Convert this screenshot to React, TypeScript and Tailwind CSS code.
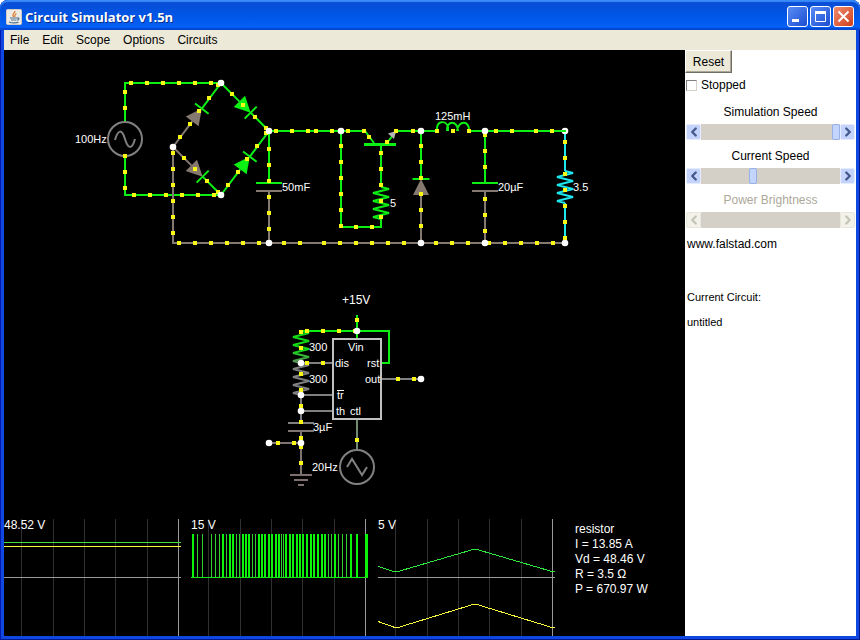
import { useState } from "react";
import { ChevronLeft, ChevronRight } from "lucide-react";

const GREEN = "#0cf014";
const GROUND = "#85786f";
const GRAY = "#808080";
const CYAN = "#1ce6ee";

const menus = ["File", "Edit", "Scope", "Options", "Circuits"];

const readout = ["resistor", "I = 13.85 A", "Vd = 48.46 V", "R = 3.5 Ω", "P = 670.97 W"];

interface Wire {
  d: string;
  color: string;
}

const wires: Wire[] = [
  // rectifier source loop
  { d: "M125 122V83H221", color: GREEN },
  { d: "M125 156V195H221", color: GREEN },
  { d: "M173 147V243H565", color: GROUND },
  // filter capacitor
  { d: "M269 131V183M256 183H282", color: GREEN },
  { d: "M269 191V243M256 191H282", color: GROUND },
  // pass transistor and its base resistor
  { d: "M269 131H365L374 143M387 143L396 131H437", color: GREEN },
  { d: "M341 131V227H381V219M381 145V187", color: GREEN },
  { d: "M469 131H565", color: GREEN },
  // output capacitor
  { d: "M485 131V183M472 183H498", color: GREEN },
  { d: "M485 191V243M472 191H498", color: GROUND },
  { d: "M565 131V171M565 203V243", color: CYAN },
  // timer
  { d: "M357 315V339M301 331H389V363H382", color: GREEN },
  { d: "M301 363H333M301 395H333M301 411H333M382 379H421", color: GRAY },
  { d: "M301 395V423M288 423H314", color: GRAY },
  { d: "M301 431V475M288 431H314M269 443H301", color: "#7f7470" },
  { d: "M290 475H312M294 480H308M298 485H304", color: "#7f7070" },
  { d: "M357 419V450", color: "#6f8a6f" },
];

// x, y, dx, dy, count
const currentDots: number[][] = [
  [131, 83, 16, 0, 6],
  [125, 92, 0, 16, 2],
  [125, 156, 0, 16, 3],
  [134, 195, 16, 0, 6],
  [180, 137, 9.5, -13, 5],
  [232, 94, 11.3, 11.3, 4],
  [184, 158, 11.3, 11.3, 4],
  [228, 185, 9.5, -13, 5],
  [173, 153, 0, 16, 6],
  [179, 243, 16, 0, 6],
  [284, 243, 16, 0, 2],
  [324, 243, 16, 0, 6],
  [436, 243, 16, 0, 3],
  [489, 243, 16, 0, 5],
  [269, 149, 0, 16, 3],
  [269, 197, 0, 16, 3],
  [276, 131, 16, 0, 3],
  [316, 131, 16, 0, 4],
  [341, 146, 0, 16, 6],
  [356, 227, 16, 0, 2],
  [381, 153, 0, 16, 5],
  [369, 137, 0, 0, 1],
  [387, 142, 9, -11, 2],
  [413, 131, 0, 0, 1],
  [421, 146, 0, 16, 6],
  [437, 131, 16, 0, 3],
  [496, 131, 16, 0, 2],
  [536, 131, 16, 0, 2],
  [485, 135, 0, 16, 3],
  [485, 199, 0, 16, 3],
  [565, 142, 0, 16, 7],
  [301, 332, 0, 16, 2],
  [307, 331, 16, 0, 4],
  [357, 320, 0, 0, 1],
  [307, 363, 16, 0, 2],
  [301, 374, 0, 16, 5],
  [301, 447, 0, 16, 2],
  [278, 443, 16, 0, 2],
  [398, 379, 16, 0, 2],
  [357, 440, 0, 0, 1],
];

const nodes: number[][] = [
  [221, 83], [173, 147], [221, 195], [269, 131], [269, 243], [341, 131],
  [421, 131], [421, 243], [485, 131], [485, 243], [565, 131], [565, 243],
  [357, 331], [301, 363], [301, 395], [301, 411], [301, 443], [269, 443], [421, 379],
];

const labels: [number, number, string][] = [
  [75, 143, "100Hz"],
  [282, 191, "50mF"],
  [390, 207, "5"],
  [435, 120, "125mH"],
  [498, 191, "20µF"],
  [573, 191, "3.5"],
  [309, 351, "300"],
  [309, 383, "300"],
  [348, 351, "Vin"],
  [335, 367, "dis"],
  [367, 367, "rst"],
  [365, 383, "out"],
  [337, 399, "tr"],
  [336, 415, "th"],
  [350, 415, "ctl"],
  [313, 431, "3µF"],
  [312, 471, "20Hz"],
];

function Diode({ x1, y1, x2, y2, from, to }: { x1: number; y1: number; x2: number; y2: number; from: string; to: string }) {
  const length = Math.hypot(x2 - x1, y2 - y1);
  const angle = (Math.atan2(y2 - y1, x2 - x1) * 180) / Math.PI;
  const mid = length / 2;

  return (
    <g transform={`translate(${x1} ${y1}) rotate(${angle})`} strokeWidth="2">
      <path d={`M0 0H${mid - 8}`} stroke={from} />
      <path d={`M${mid + 8} 0H${length}M${mid + 8} -8.5V8.5`} stroke={to} />
      <path d={`M${mid - 8} -8L${mid + 8} 0L${mid - 8} 8Z`} fill={from} stroke="none" />
    </g>
  );
}

function Resistor({ x, y, color }: { x: number; y: number; color: string }) {
  const points = [`${x},${y}`];
  for (let i = 0; i < 4; i++) {
    const top = y + i * 8;
    points.push(`${x + 8},${top + 2}`, `${x - 8},${top + 6}`);
  }
  points.push(`${x},${y + 32}`);
  return <polyline points={points.join(" ")} fill="none" stroke={color} strokeWidth="2" />;
}

function Circuit() {
  return (
    <svg
      viewBox="4 50 681 468"
      preserveAspectRatio="xMinYMin meet"
      className="h-[468px] w-full shrink-0 font-['Liberation_Sans',Arial,sans-serif]"
      role="img"
      aria-label="Circuit"
    >
      <defs>
        <linearGradient id="drop" gradientUnits="userSpaceOnUse" x1="0" y1="331" x2="0" y2="363">
          <stop offset="0.6" stopColor="#13dc17" />
          <stop offset="1" stopColor="#5f8c60" />
        </linearGradient>
      </defs>

      {wires.map((w) => (
        <path key={w.d} d={w.d} fill="none" stroke={w.color} strokeWidth="2" />
      ))}

      <Diode x1={173} y1={147} x2={221} y2={83} from={GROUND} to={GREEN} />
      <Diode x1={221} y1={83} x2={269} y2={131} from={GREEN} to={GREEN} />
      <Diode x1={173} y1={147} x2={221} y2={195} from={GROUND} to={GREEN} />
      <Diode x1={221} y1={195} x2={269} y2={131} from={GREEN} to={GREEN} />
      <Diode x1={421} y1={243} x2={421} y2={131} from={GROUND} to={GREEN} />

      <Resistor x={381} y={187} color={GREEN} />
      <Resistor x={565} y={171} color={CYAN} />
      <Resistor x={301} y={331} color="url(#drop)" />
      <Resistor x={301} y={363} color={GRAY} />

      {/* Transistor */}
      <path d="M364 144.500H396" stroke={GREEN} strokeWidth="3" />
      <path d="M396 131L394 139L388 133.500Z" fill="#b4b4b4" />

      {/* Inductor */}
      <path
        d="M437 131C436 120 446 120 448 127L448 131M447 131C446 120 458 120 458 131M457 131C458 120 470 120 469 131"
        fill="none"
        stroke={GREEN}
        strokeWidth="2"
      />

      {/* Voltage sources */}
      <g fill="none" stroke={GRAY} strokeWidth="2">
        <circle cx="125" cy="139" r="17" />
        <path d="M115 140C118 129 122 129 125 139S132 150 135 139" />
        <circle cx="357" cy="467" r="17" />
        <path d="M347 467L352 459L362 475L367 467" />
      </g>

      <rect x="333" y="339" width="48" height="80" fill="none" stroke="#c0c0c0" strokeWidth="2" />
      <path d="M337 390.500H344" stroke="#fff" />

      {currentDots.flatMap(([x, y, dx, dy, count]) =>
        Array.from({ length: count }).map((_, i) => (
          <rect
            key={`${x}-${y}-${i}`}
            x={Math.round(x + dx * i) - 2}
            y={Math.round(y + dy * i) - 2}
            width="4"
            height="4"
            fill="#f8f814"
          />
        ))
      )}

      {nodes.map(([x, y]) => (
        <circle key={`${x}-${y}`} cx={x} cy={y} r="3.3" fill="#fff" />
      ))}
      <path d="M562 131H566" stroke={GREEN} strokeWidth="2" />

      <g fill="#fff" className="text-[11px]">
        {labels.map(([x, y, text]) => (
          <text key={`${x}-${y}`} x={x} y={y}>{text}</text>
        ))}
      </g>
      <text x="342" y="304" fill="#fff" className="text-[12px]">+15V</text>
    </svg>
  );
}

// left edge and width of each high period
const pulses: number[][] = [
  [1, 2], [6, 1], [11, 1], [20, 1], [24, 1], [28, 1], [31, 2], [35, 1], [38, 2], [41, 2],
  [45, 1], [48, 1], [51, 2], [54, 2], [57, 2], [61, 1], [64, 1], [67, 2], [70, 2], [73, 2],
  [77, 2], [80, 2], [84, 2], [87, 2], [90, 1], [92, 1], [94, 2], [98, 2], [101, 2], [105, 2],
  [108, 2], [111, 2], [115, 2], [119, 2], [122, 2], [126, 2], [130, 2], [133, 2], [137, 1],
  [140, 1], [143, 2], [147, 1], [151, 1], [155, 1], [159, 2], [165, 2], [174, 3],
];

function Scope({ label, children }: { label: string; children: React.ReactNode }) {
  return (
    <div className="relative h-[118px] w-[177px] shrink-0">
      <svg viewBox="0 0 177 118" className="block h-full w-full" fill="none" shapeRendering="crispEdges">
        {[17, 49, 80, 111, 143].map((x) => (
          <path key={x} d={`M${x + 0.5} 1V118`} stroke="#303030" />
        ))}
        <path d="M0 59.500H177M174.500 1V118" stroke="#9a9a9a" />
        {children}
      </svg>
      <span className="absolute top-0 left-0 text-xs leading-[14px] text-white">{label}</span>
    </div>
  );
}

function Scopes() {
  return (
    <div className="mt-auto flex gap-[10px]">
      <Scope label="48.52 V">
        <path d="M0 24.500H177" stroke="#3fe03f" />
        <path d="M0 28.500H177" stroke="#fafa3c" />
      </Scope>
      <Scope label="15 V">
        <path d="M0 59.500H177" stroke="#12e612" />
        {pulses.map(([x, width]) => (
          <rect key={x} x={x} y="16" width={width} height="43" fill={width > 1 ? "#0cf40c" : "#30d030"} />
        ))}
      </Scope>
      <Scope label="5 V">
        <path d="M0 48.500L16 53.500H20L95 31.500H99L174 53.500H177" stroke="#2ce83a" />
        <path d="M0 103.500L17 109.500H20L95 86.500H99L174 109.500H177" stroke="#fafa3c" />
      </Scope>
      <div className="ml-2.5 pt-1 text-xs leading-[15px] text-white">
        {readout.map((line) => (
          <p key={line}>{line}</p>
        ))}
      </div>
    </div>
  );
}

function TitleBar() {
  return (
    <header className="flex h-[30px] items-center gap-[3px] rounded-t-lg bg-linear-to-b from-[#0a4ad0] via-[#0056e6] to-[#0562fb] pt-[3px] pr-1.5 pl-1.5 shadow-[inset_0_2px_1px_#3a8bfa,inset_0_-2px_1px_#0548d0]">
      <svg viewBox="0 0 16 16" className="size-4" aria-hidden="true">
        <rect x="0.500" y="0.500" width="15" height="15" rx="1" fill="#eeeae4" stroke="#cfcac4" />
        <path d="M9 2C9 4 5.500 4.500 7.500 8M10.500 4.500C8 5.500 9.500 6.500 8.500 8" fill="none" stroke="#e0803a" strokeWidth="1.300" />
        <path d="M4 9H11M5 11H10.500M3 13C6 14.500 11 14 12.500 13M11 9C14 8.500 13 11 11 11" fill="none" stroke="#4f7396" strokeWidth="1.200" />
      </svg>
      <h1 className="flex-1 font-['Open_Sans','Noto_Sans',sans-serif] text-[13px] leading-5 font-bold text-white [text-shadow:1px_1px_#0a2f8c]">
        Circuit Simulator v1.5n
      </h1>
      <div className="flex gap-0.5">
        <button aria-label="Minimize" className="size-[21px] rounded-[3px] border border-white bg-linear-to-br from-[#5a8cf6] to-[#1c4bd0]">
          <svg viewBox="0 0 19 19"><path d="M4 13.500H11" stroke="#fff" strokeWidth="3" /></svg>
        </button>
        <button aria-label="Maximize" className="size-[21px] rounded-[3px] border border-white bg-linear-to-br from-[#5a8cf6] to-[#1c4bd0]">
          <svg viewBox="0 0 19 19" fill="none" stroke="#fff"><path d="M4.500 4V14.500H14.500V4" /><path d="M4 5.500H15" strokeWidth="3" /></svg>
        </button>
        <button aria-label="Close" className="size-[21px] rounded-[3px] border border-white bg-linear-to-br from-[#ee8a6c] to-[#d03c14]">
          <svg viewBox="0 0 19 19"><path d="M4.500 4.500L14.500 14.500M14.500 4.500L4.500 14.500" stroke="#fff" strokeWidth="2" /></svg>
        </button>
      </div>
    </header>
  );
}

function ScrollSlider({ id, label, initial, disabled = false }: { id: string; label: string; initial: number; disabled?: boolean }) {
  const [value, setValue] = useState(initial);
  const arrow = disabled
    ? "flex w-[15px] items-center justify-center rounded-xs border border-[#e8e7dc] bg-[#f2f1ea] text-[#c6c5b8]"
    : "flex w-[15px] items-center justify-center rounded-xs border border-[#e4ecfe] bg-[#c3d3fc] text-[#44588c]";

  return (
    <div>
      <label htmlFor={id} className={disabled ? "block pt-1 text-center leading-6 text-[#aca899]" : "block pt-1 text-center leading-6"}>
        {label}
      </label>
      <div className="flex h-4 px-px">
        <button className={arrow} disabled={disabled} aria-label={`Decrease ${label}`} onClick={() => setValue(value - 1)}>
          <ChevronLeft size={14} strokeWidth={4} className="shrink-0" />
        </button>
        <input
          id={id}
          type="range"
          value={value}
          disabled={disabled}
          onChange={(e) => setValue(Number(e.target.value))}
          className="h-4 min-w-0 flex-1 appearance-none bg-[#d4d0c8] [&::-webkit-slider-thumb]:h-4 [&::-webkit-slider-thumb]:w-2 [&::-webkit-slider-thumb]:appearance-none [&::-webkit-slider-thumb]:rounded-xs [&::-webkit-slider-thumb]:border [&::-webkit-slider-thumb]:border-[#98b0e8] [&::-webkit-slider-thumb]:bg-[#c3d5fd] disabled:[&::-webkit-slider-thumb]:invisible"
        />
        <button className={arrow} disabled={disabled} aria-label={`Increase ${label}`} onClick={() => setValue(value + 1)}>
          <ChevronRight size={14} strokeWidth={4} className="shrink-0" />
        </button>
      </div>
    </div>
  );
}

function Sidebar() {
  return (
    <aside className="flex w-[171px] shrink-0 flex-col bg-white">
      <button className="h-[23px] w-[47px] border border-t-white border-r-[#716f64] border-b-[#716f64] border-l-white bg-[#ece9d8] shadow-[inset_-1px_-1px_#aca899]">
        Reset
      </button>
      <label className="flex h-6 items-center gap-1 pl-px">
        <input
          type="checkbox"
          className="size-[11px] appearance-none border border-t-[#808080] border-r-[#d4d0c8] border-b-[#d4d0c8] border-l-[#808080] bg-white checked:bg-[#44588c]"
        />
        Stopped
      </label>
      <div className="-mt-px">
        <ScrollSlider id="sim-speed" label="Simulation Speed" initial={100} />
        <ScrollSlider id="current-speed" label="Current Speed" initial={37} />
        <ScrollSlider id="power" label="Power Brightness" initial={50} disabled />
      </div>
      <p className="mt-2 pl-0.5 leading-4">www.falstad.com</p>
      <p className="mt-[37px] pl-0.5 text-[11px] leading-4">Current Circuit:</p>
      <p className="mt-[9px] pl-0.5 text-[11px] leading-4">untitled</p>
    </aside>
  );
}

export default function App() {
  return (
    <div className="bg-white font-['Liberation_Sans',Arial,sans-serif] text-xs text-black">
      <div className="flex min-h-screen flex-col rounded-t-lg bg-[#0f48e0] shadow-[inset_1px_0_#0019a8,inset_-1px_-1px_#00178f]">
        <TitleBar />
        <div className="mx-1 mb-1 flex flex-1 flex-col">
          <nav className="flex h-5 items-center gap-[13px] bg-[#ece9d8] pl-1.5">
            {menus.map((menu) => (
              <button key={menu}>{menu}</button>
            ))}
          </nav>
          <div className="flex flex-1">
            <main className="flex min-w-0 flex-1 flex-col overflow-hidden bg-black">
              <Circuit />
              <Scopes />
            </main>
            <Sidebar />
          </div>
        </div>
      </div>
    </div>
  );
}
